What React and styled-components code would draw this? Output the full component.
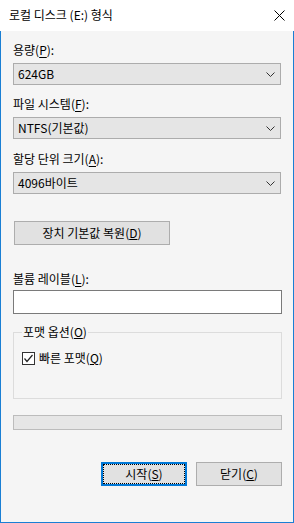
import styled, { createGlobalStyle } from "styled-components";

const GlobalStyle = createGlobalStyle`
  html, body {
    margin: 0;
    padding: 0;
    background: #ffffff;
  }
  body {
    font-family: "Noto Sans CJK KR", "Noto Sans", sans-serif;
    font-size: 12px;
    color: #000;
  }
`;

const Chevron = () => (
  <svg width="9" height="5" viewBox="0 0 9 5">
    <path d="M0.5 0.5 L4.5 4.5 L8.5 0.5" fill="none" stroke="#333" strokeWidth="1" />
  </svg>
);

const CloseIcon = () => (
  <svg width="11" height="11" viewBox="0 0 11 11">
    <path d="M0.5 0.5 L10.5 10.5 M10.5 0.5 L0.5 10.5" stroke="#000" strokeWidth="1" />
  </svg>
);

const CheckIcon = () => (
  <svg width="11" height="11" viewBox="0 0 11 11">
    <path d="M1.5 5.5 L4 8.5 L9.5 2" fill="none" stroke="#222" strokeWidth="1.2" />
  </svg>
);

const App = () => {
  return (
    <>
      <GlobalStyle />
      <Window>
        <TitleBar>
          <Title>로컬 디스크 (E:) 형식</Title>
          <CloseButton>
            <CloseIcon />
          </CloseButton>
        </TitleBar>
        <Body>
          <Field>
            <Label>
              용량(<u>P</u>):
            </Label>
            <Select>
              <span>624GB</span>
              <Chevron />
            </Select>
          </Field>
          <Field>
            <Label>
              파일 시스템(<u>F</u>):
            </Label>
            <Select>
              <span>NTFS(기본값)</span>
              <Chevron />
            </Select>
          </Field>
          <Field $gapAbove={1}>
            <Label>
              할당 단위 크기(<u>A</u>):
            </Label>
            <Select>
              <span>4096바이트</span>
              <Chevron />
            </Select>
          </Field>
          <ResetButton>
            장치 기본값 복원(<u>D</u>)
          </ResetButton>
          <VolumeField>
            <Label>
              볼륨 레이블(<u>L</u>):
            </Label>
            <TextInput />
          </VolumeField>
          <GroupBox>
            <Legend>
              포맷 옵션(<u>O</u>)
            </Legend>
            <CheckRow>
              <CheckBox>
                <CheckIcon />
              </CheckBox>
              <span>
                빠른 포맷(<u>Q</u>)
              </span>
            </CheckRow>
          </GroupBox>
          <Progress />
          <ButtonRow>
            <DialogButton $primary>
              <FocusRing>
                시작(<u>S</u>)
              </FocusRing>
            </DialogButton>
            <DialogButton>
              <FocusRing $hidden>
                닫기(<u>C</u>)
              </FocusRing>
            </DialogButton>
          </ButtonRow>
        </Body>
      </Window>
    </>
  );
};

export default App;

const Window = styled.div`
  width: 294px;
  height: 523px;
  display: flex;
  flex-direction: column;
  box-sizing: border-box;
`;

const TitleBar = styled.div`
  height: 31px;
  flex: none;
  background: #ffffff;
  display: flex;
  align-items: center;
  justify-content: space-between;
  padding: 0 8px 0 9px;
`;

const Title = styled.div`
  font-size: 12px;
  line-height: 16px;
  margin-top: -1px;
`;

const CloseButton = styled.div`
  width: 14px;
  display: flex;
  align-items: center;
  justify-content: center;
  margin-top: -1px;
`;

const Body = styled.div`
  flex: 1;
  background: #f5f5f5;
  border: 1px solid #1a7fd4;
  border-top: none;
  padding: 11px 12px 0 12px;
  display: flex;
  flex-direction: column;
`;

const Field = styled.div`
  display: flex;
  flex-direction: column;
  gap: 5px;
  margin-top: ${(p) => p.$gapAbove || 0}px;
  margin-bottom: 11px;
`;

const Label = styled.div`
  line-height: 16px;
  height: 16px;
  u {
    text-underline-offset: 2px;
  }
`;

const Select = styled.div`
  height: 22px;
  box-sizing: border-box;
  border: 1px solid #acacac;
  background: #e5e5e5;
  display: flex;
  align-items: center;
  justify-content: space-between;
  padding: 0 5px 0 4px;
  line-height: 16px;
`;

const ResetButton = styled.div`
  width: 156px;
  height: 24px;
  box-sizing: border-box;
  margin-top: 16px;
  margin-left: 1px;
  border: 1px solid #adadad;
  background: #e1e1e1;
  display: flex;
  align-items: center;
  justify-content: center;
  line-height: 16px;
`;

const VolumeField = styled(Field)`
  gap: 3px;
  margin-top: 26px;
  margin-bottom: 0;
`;

const TextInput = styled.div`
  height: 24px;
  box-sizing: border-box;
  border: 1px solid #7a7a7a;
  background: #ffffff;
  margin-right: -1px;
`;

const GroupBox = styled.fieldset`
  margin: 10px -1px 0 0;
  padding: 10px 8px 0 8px;
  height: 75px;
  box-sizing: border-box;
  border: 1px solid #dcdcdc;
  min-width: 0;
`;

const Legend = styled.legend`
  padding: 0 1px;
  margin-left: 0;
  line-height: 16px;
`;

const CheckRow = styled.div`
  display: flex;
  align-items: center;
  gap: 4px;
  line-height: 16px;
`;

const CheckBox = styled.div`
  width: 13px;
  height: 13px;
  box-sizing: border-box;
  border: 1px solid #333333;
  background: #ffffff;
  display: flex;
  align-items: center;
  justify-content: center;
`;

const Progress = styled.div`
  height: 15px;
  box-sizing: border-box;
  margin: 16px -1px 0 0;
  border: 1px solid #bcbcbc;
  background: #e6e6e6;
`;

const ButtonRow = styled.div`
  display: flex;
  justify-content: flex-end;
  gap: 9px;
  margin-top: 32px;
  margin-right: -1px;
`;

const DialogButton = styled.div`
  width: 86px;
  height: 24px;
  box-sizing: border-box;
  border: ${(p) => (p.$primary ? "2px solid #0078d7" : "1px solid #adadad")};
  padding: ${(p) => (p.$primary ? "0" : "1px")};
  background: #e1e1e1;
  display: flex;
`;

const FocusRing = styled.div`
  flex: 1;
  border: 1px dotted ${(p) => (p.$hidden ? "transparent" : "#000")};
  display: flex;
  align-items: center;
  justify-content: center;
  line-height: 16px;
`;
